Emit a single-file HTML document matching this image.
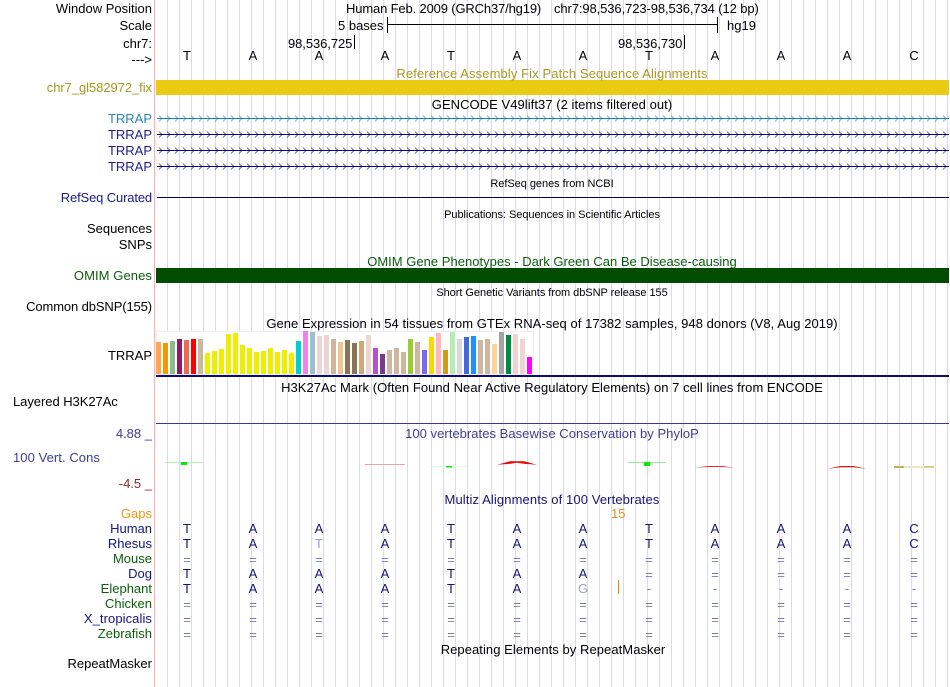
<!DOCTYPE html>
<html><head><meta charset="utf-8"><style>
html,body{margin:0;padding:0;background:#fff}
#p{position:relative;width:950px;height:687px;overflow:hidden;background:#fff;font:13px/16px "Liberation Sans",sans-serif;color:#000}
#p>span{position:absolute;white-space:nowrap;font-style:normal;margin-top:1px}
.r{right:798px;text-align:right}
.c{left:155px;width:794px;text-align:center}
.s{font-size:11px;letter-spacing:-.04px}
.b{width:24px;text-align:center}
.n{color:#14147a}.gn{color:#0b5d0b}.bl{color:#3d3d99}
.e{color:#7878b4}.lt{color:#a0a0c8}
</style></head><body><div id="p">
<svg style="position:absolute;left:0;top:0" width="950" height="687" xmlns="http://www.w3.org/2000/svg">
<defs>
<pattern id="ln" x="167" y="0" width="12" height="687" patternUnits="userSpaceOnUse"><rect width="1" height="687" fill="#d9d9f3"/></pattern>
<pattern id="cb" x="157" y="113" width="8" height="16" patternUnits="userSpaceOnUse"><path d="M2 2.500L5 5.500L2 8.500" fill="none" stroke="#1a7fb8" stroke-width=".8" stroke-opacity=".75"/></pattern>
<pattern id="cn" x="157" y="129" width="8" height="16" patternUnits="userSpaceOnUse"><path d="M2 2.500L5 5.500L2 8.500" fill="none" stroke="#00007d" stroke-width=".8" stroke-opacity=".75"/></pattern>
</defs>
<rect x="160" y="0" width="790" height="687" fill="url(#ln)"/>
<rect x="154" y="0" width="1" height="687" fill="#ffb0b0"/>
<rect x="156" y="80" width="793" height="15" fill="#e9cb14"/>
<rect x="157" y="118" width="792" height="1" fill="#1a7fb8"/>
<rect x="157" y="113" width="792" height="10" fill="url(#cb)"/>
<g fill="#00007d"><rect x="157" y="134" width="792" height="1"/><rect x="157" y="150" width="792" height="1"/><rect x="157" y="166" width="792" height="1"/></g>
<rect x="157" y="129" width="792" height="10" fill="url(#cn)"/>
<rect x="157" y="145" width="792" height="10" fill="url(#cn)"/>
<rect x="157" y="161" width="792" height="10" fill="url(#cn)"/>
<rect x="157" y="197" width="792" height="1" fill="#00006e"/>
<rect x="156" y="268" width="793" height="15" fill="#004d00"/>
<!-- scale -->
<g fill="#000"><rect x="387" y="24" width="331" height="1"/><rect x="387" y="17" width="1" height="16"/><rect x="717" y="17" width="1" height="16"/><rect x="354" y="35" width="1" height="14"/><rect x="684" y="35" width="1" height="14"/></g>
<!-- GTEx -->
<rect x="156.500" y="331.500" width="377" height="43" fill="#fff" stroke="#eeeeee"/>
<g>
<rect x="156" y="342" width="5" height="32" fill="#FFA54F"/><rect x="163" y="343" width="5" height="31" fill="#EE9A00"/><rect x="170" y="341" width="5" height="33" fill="#8FBC8F"/><rect x="177" y="339" width="5" height="35" fill="#8B1C62"/><rect x="184" y="340" width="5" height="34" fill="#EE6A50"/><rect x="191" y="339" width="5" height="35" fill="#FF0000"/><rect x="198" y="339" width="5" height="35" fill="#CDB79E"/>
<rect x="205" y="353" width="5" height="21" fill="#EEEE00"/><rect x="212" y="351" width="5" height="23" fill="#EEEE00"/><rect x="219" y="349" width="5" height="25" fill="#EEEE00"/><rect x="226" y="334" width="5" height="40" fill="#EEEE00"/><rect x="233" y="333" width="5" height="41" fill="#EEEE00"/><rect x="240" y="345" width="5" height="29" fill="#EEEE00"/><rect x="247" y="348" width="5" height="26" fill="#EEEE00"/><rect x="254" y="352" width="5" height="22" fill="#EEEE00"/><rect x="261" y="351" width="5" height="23" fill="#EEEE00"/><rect x="268" y="348" width="5" height="26" fill="#EEEE00"/><rect x="275" y="352" width="5" height="22" fill="#EEEE00"/><rect x="282" y="350" width="5" height="24" fill="#EEEE00"/><rect x="289" y="353" width="5" height="21" fill="#EEEE00"/>
<rect x="296" y="341" width="5" height="33" fill="#00CED1"/><rect x="303" y="331" width="5" height="43" fill="#EE82EE"/><rect x="310" y="332" width="5" height="42" fill="#9AC0CD"/><rect x="317" y="336" width="5" height="38" fill="#EED5D2"/><rect x="324" y="335" width="5" height="39" fill="#EED5D2"/><rect x="331" y="339" width="5" height="35" fill="#CDB79E"/><rect x="338" y="342" width="5" height="32" fill="#EEC591"/><rect x="345" y="340" width="5" height="34" fill="#8B7355"/><rect x="352" y="343" width="5" height="31" fill="#8B7355"/><rect x="359" y="341" width="5" height="33" fill="#CDAA7D"/><rect x="366" y="335" width="5" height="39" fill="#EED5D2"/><rect x="373" y="348" width="5" height="26" fill="#B452CD"/><rect x="380" y="354" width="5" height="20" fill="#7A378B"/><rect x="387" y="350" width="5" height="24" fill="#CDB79E"/><rect x="394" y="348" width="5" height="26" fill="#CDB79E"/><rect x="401" y="352" width="5" height="22" fill="#CDB79E"/><rect x="408" y="339" width="5" height="35" fill="#9ACD32"/><rect x="415" y="342" width="5" height="32" fill="#CDB79E"/><rect x="422" y="350" width="5" height="24" fill="#7B68EE"/><rect x="429" y="337" width="5" height="37" fill="#FFD700"/><rect x="436" y="333" width="5" height="41" fill="#FFB6C1"/><rect x="443" y="350" width="5" height="24" fill="#CD9B1D"/><rect x="450" y="332" width="5" height="42" fill="#B4EEB4"/><rect x="457" y="339" width="5" height="35" fill="#D9D9D9"/><rect x="464" y="337" width="5" height="37" fill="#4169E1"/><rect x="471" y="336" width="5" height="38" fill="#1E90FF"/><rect x="478" y="340" width="5" height="34" fill="#CDB79E"/><rect x="485" y="339" width="5" height="35" fill="#CDB79E"/><rect x="492" y="344" width="5" height="30" fill="#FFD39B"/><rect x="499" y="332" width="5" height="42" fill="#A6A6A6"/><rect x="506" y="335" width="5" height="39" fill="#008B45"/><rect x="513" y="334" width="5" height="40" fill="#EED5D2"/><rect x="520" y="339" width="5" height="35" fill="#EED5D2"/><rect x="527" y="357" width="5" height="17" fill="#FF00FF"/>
</g>
<rect x="156" y="375" width="793" height="2" fill="#0a0a78"/>
<rect x="156" y="423" width="793" height="1" fill="#3636aa"/>
<!-- conservation -->
<rect x="165" y="462" width="38" height="1" fill="#b0f5b0"/><rect x="181" y="462" width="6" height="3" fill="#00ee00"/>
<rect x="365" y="464" width="40" height="1" fill="#f5a0a0"/>
<rect x="431" y="466" width="36" height="1" fill="#dcfadc"/><rect x="446" y="466" width="6" height="1.500" fill="#00ee00"/>
<path d="M497 464.800L510 461.300L524 461.300L537 464.800L524 463.800L517 462.800L510 463.800Z" fill="#ee0000"/>
<rect x="628" y="462" width="38" height="1" fill="#90f090"/><rect x="644" y="462" width="6" height="4" fill="#00ee00"/>
<path d="M695 467.800L708 466L722 466L735 467.800L722 467L708 467Z" fill="#ee2222"/>
<path d="M827 469L840 466L854 466L867 469L854 467.300L840 467.300Z" fill="#ee1111"/>
<rect x="894" y="466" width="40" height="2" fill="#e9e6c2"/><rect x="894" y="466" width="10" height="2" fill="#bdb44e"/><rect x="924" y="466" width="10" height="1.500" fill="#cfc878"/>
<rect x="618" y="580" width="1" height="14" fill="#e08a00"/>
</svg>

<span class="r" style="top:0">Window Position</span>
<span class="r" style="top:17px">Scale</span>
<span class="r" style="top:35px">chr7:</span>
<span class="r" style="top:51px">---&gt;</span>
<span style="left:346px;top:0;letter-spacing:-.15px">Human Feb. 2009 (GRCh37/hg19)</span>
<span style="left:554px;top:0;letter-spacing:-.1px">chr7:98,536,723-98,536,734 (12 bp)</span>
<span style="left:338px;top:17px">5 bases</span>
<span style="left:727px;top:17px">hg19</span>
<span style="left:288px;top:35px;letter-spacing:-.08px">98,536,725</span>
<span style="left:618px;top:35px;letter-spacing:-.08px">98,536,730</span>
<span class="b" style="left:175px;top:47px">T</span><span class="b" style="left:241px;top:47px">A</span><span class="b" style="left:307px;top:47px">A</span><span class="b" style="left:373px;top:47px">A</span><span class="b" style="left:439px;top:47px">T</span><span class="b" style="left:505px;top:47px">A</span><span class="b" style="left:571px;top:47px">A</span><span class="b" style="left:637px;top:47px">T</span><span class="b" style="left:703px;top:47px">A</span><span class="b" style="left:769px;top:47px">A</span><span class="b" style="left:835px;top:47px">A</span><span class="b" style="left:902px;top:47px">C</span>

<span class="c" style="top:65px;color:#a89a1e;letter-spacing:.1px">Reference Assembly Fix Patch Sequence Alignments</span>
<span class="r" style="top:79px;color:#a89a1e;letter-spacing:-.06px">chr7_gl582972_fix</span>
<span class="c" style="top:96px;letter-spacing:.05px">GENCODE V49lift37 (2 items filtered out)</span>
<span class="r" style="top:110px;color:#2b84bd">TRRAP</span>
<span class="r" style="top:126px;color:#1f1f8c">TRRAP</span>
<span class="r" style="top:142px;color:#1f1f8c">TRRAP</span>
<span class="r" style="top:158px;color:#1f1f8c">TRRAP</span>
<span class="c s" style="top:175px">RefSeq genes from NCBI</span>
<span class="r" style="top:189px;color:#1a1a84;letter-spacing:-.14px">RefSeq Curated</span>
<span class="c s" style="top:206px">Publications: Sequences in Scientific Articles</span>
<span class="r" style="top:220px">Sequences</span>
<span class="r" style="top:236px">SNPs</span>
<span class="c" style="top:253px;color:#0b5d0b;letter-spacing:.02px">OMIM Gene Phenotypes - Dark Green Can Be Disease-causing</span>
<span class="r" style="top:267px;color:#0b5d0b;letter-spacing:.08px">OMIM Genes</span>
<span class="c s" style="top:284px">Short Genetic Variants from dbSNP release 155</span>
<span class="r" style="top:298px;letter-spacing:-.12px">Common dbSNP(155)</span>
<span class="c" style="top:315px;letter-spacing:.045px">Gene Expression in 54 tissues from GTEx RNA-seq of 17382 samples, 948 donors (V8, Aug 2019)</span>
<span class="r" style="top:347px">TRRAP</span>
<span class="c" style="top:379px;letter-spacing:.05px">H3K27Ac Mark (Often Found Near Active Regulatory Elements) on 7 cell lines from ENCODE</span>
<span style="left:13px;top:393px;letter-spacing:-.05px">Layered H3K27Ac</span>
<span class="r bl" style="top:425px">4.88 _</span>
<span class="c bl" style="top:425px;letter-spacing:.04px">100 vertebrates Basewise Conservation by PhyloP</span>
<span class="bl" style="left:13px;top:449px;letter-spacing:.07px">100 Vert. Cons</span>
<span class="r" style="top:475px;color:#8a2a2a">-4.5 _</span>
<span class="c n" style="top:491px;letter-spacing:.11px">Multiz Alignments of 100 Vertebrates</span>
<span class="r" style="top:505px;color:#f29414">Gaps</span>
<span style="left:611px;top:505px;color:#e68f14">15</span>

<span class="r n" style="top:520px">Human</span>
<span class="r n" style="top:535px">Rhesus</span>
<span class="r gn" style="top:550px">Mouse</span>
<span class="r n" style="top:565px">Dog</span>
<span class="r gn" style="top:580px">Elephant</span>
<span class="r gn" style="top:595px">Chicken</span>
<span class="r n" style="top:610px;letter-spacing:.08px">X_tropicalis</span>
<span class="r gn" style="top:625px">Zebrafish</span>
<span class="c" style="top:641px;left:156px;letter-spacing:.06px">Repeating Elements by RepeatMasker</span>
<span class="r" style="top:655px">RepeatMasker</span>

<span class="b n" style="left:175px;top:520px">T</span><span class="b n" style="left:241px;top:520px">A</span><span class="b n" style="left:307px;top:520px">A</span><span class="b n" style="left:373px;top:520px">A</span><span class="b n" style="left:439px;top:520px">T</span><span class="b n" style="left:505px;top:520px">A</span><span class="b n" style="left:571px;top:520px">A</span><span class="b n" style="left:637px;top:520px">T</span><span class="b n" style="left:703px;top:520px">A</span><span class="b n" style="left:769px;top:520px">A</span><span class="b n" style="left:835px;top:520px">A</span><span class="b n" style="left:902px;top:520px">C</span>

<span class="b n" style="left:175px;top:535px">T</span><span class="b n" style="left:241px;top:535px">A</span><span class="b lt" style="left:307px;top:535px">T</span><span class="b n" style="left:373px;top:535px">A</span><span class="b n" style="left:439px;top:535px">T</span><span class="b n" style="left:505px;top:535px">A</span><span class="b n" style="left:571px;top:535px">A</span><span class="b n" style="left:637px;top:535px">T</span><span class="b n" style="left:703px;top:535px">A</span><span class="b n" style="left:769px;top:535px">A</span><span class="b n" style="left:835px;top:535px">A</span><span class="b n" style="left:902px;top:535px">C</span>

<span class="b e" style="left:175px;top:551px">=</span><span class="b e" style="left:241px;top:551px">=</span><span class="b e" style="left:307px;top:551px">=</span><span class="b e" style="left:373px;top:551px">=</span><span class="b e" style="left:439px;top:551px">=</span><span class="b e" style="left:505px;top:551px">=</span><span class="b e" style="left:571px;top:551px">=</span><span class="b e" style="left:637px;top:551px">=</span><span class="b e" style="left:703px;top:551px">=</span><span class="b e" style="left:769px;top:551px">=</span><span class="b e" style="left:835px;top:551px">=</span><span class="b e" style="left:902px;top:551px">=</span>

<span class="b n" style="left:175px;top:565px">T</span><span class="b n" style="left:241px;top:565px">A</span><span class="b n" style="left:307px;top:565px">A</span><span class="b n" style="left:373px;top:565px">A</span><span class="b n" style="left:439px;top:565px">T</span><span class="b n" style="left:505px;top:565px">A</span><span class="b n" style="left:571px;top:565px">A</span><span class="b e" style="left:637px;top:566px">=</span><span class="b e" style="left:703px;top:566px">=</span><span class="b e" style="left:769px;top:566px">=</span><span class="b e" style="left:835px;top:566px">=</span><span class="b e" style="left:902px;top:566px">=</span>

<span class="b n" style="left:175px;top:580px">T</span><span class="b n" style="left:241px;top:580px">A</span><span class="b n" style="left:307px;top:580px">A</span><span class="b n" style="left:373px;top:580px">A</span><span class="b n" style="left:439px;top:580px">T</span><span class="b n" style="left:505px;top:580px">A</span><span class="b lt" style="left:571px;top:580px">G</span><span class="b e" style="left:637px;top:580px">-</span><span class="b e" style="left:703px;top:580px">-</span><span class="b e" style="left:769px;top:580px">-</span><span class="b e" style="left:835px;top:580px">-</span><span class="b e" style="left:902px;top:580px">-</span>

<span class="b e" style="left:175px;top:596px">=</span><span class="b e" style="left:241px;top:596px">=</span><span class="b e" style="left:307px;top:596px">=</span><span class="b e" style="left:373px;top:596px">=</span><span class="b e" style="left:439px;top:596px">=</span><span class="b e" style="left:505px;top:596px">=</span><span class="b e" style="left:571px;top:596px">=</span><span class="b e" style="left:637px;top:596px">=</span><span class="b e" style="left:703px;top:596px">=</span><span class="b e" style="left:769px;top:596px">=</span><span class="b e" style="left:835px;top:596px">=</span><span class="b e" style="left:902px;top:596px">=</span>

<span class="b e" style="left:175px;top:611px">=</span><span class="b e" style="left:241px;top:611px">=</span><span class="b e" style="left:307px;top:611px">=</span><span class="b e" style="left:373px;top:611px">=</span><span class="b e" style="left:439px;top:611px">=</span><span class="b e" style="left:505px;top:611px">=</span><span class="b e" style="left:571px;top:611px">=</span><span class="b e" style="left:637px;top:611px">=</span><span class="b e" style="left:703px;top:611px">=</span><span class="b e" style="left:769px;top:611px">=</span><span class="b e" style="left:835px;top:611px">=</span><span class="b e" style="left:902px;top:611px">=</span>

<span class="b e" style="left:175px;top:626px">=</span><span class="b e" style="left:241px;top:626px">=</span><span class="b e" style="left:307px;top:626px">=</span><span class="b e" style="left:373px;top:626px">=</span><span class="b e" style="left:439px;top:626px">=</span><span class="b e" style="left:505px;top:626px">=</span><span class="b e" style="left:571px;top:626px">=</span><span class="b e" style="left:637px;top:626px">=</span><span class="b e" style="left:703px;top:626px">=</span><span class="b e" style="left:769px;top:626px">=</span><span class="b e" style="left:835px;top:626px">=</span><span class="b e" style="left:902px;top:626px">=</span>
</div></body></html>
